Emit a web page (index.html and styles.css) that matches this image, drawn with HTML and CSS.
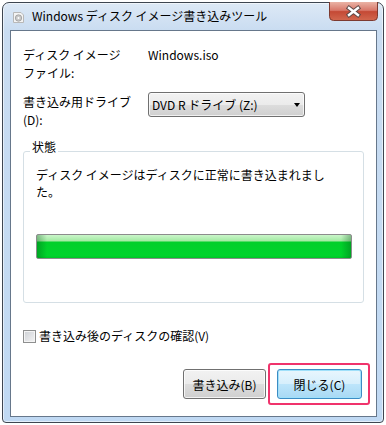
FILE: index.html
```html
<!DOCTYPE html>
<html lang="ja">
<head>
    <meta charset="UTF-8">
    <title>Windows ディスク イメージ書き込みツール</title>
    <link rel="stylesheet" href="styles.css">
</head>
<body>
    <div class="window">
        <div class="titlebar">
            <svg class="app-icon" width="11" height="11" viewBox="0 0 11 11">
                <path d="M0.5 0.5 H8 L10.5 3 V10.5 H0.5 Z" fill="#f4f4f4" stroke="#b8b8b8"/>
                <circle cx="5.5" cy="6" r="3.2" fill="#c9c9c9" stroke="#9a9a9a" stroke-width="0.8"/>
                <circle cx="5.5" cy="6" r="1" fill="#fff"/>
            </svg>
            <span class="title">Windows ディスク イメージ書き込みツール</span>
            <svg class="close-btn" width="49" height="19" viewBox="0 0 49 19">
                <defs>
                    <linearGradient id="closeGrad" x1="0" y1="0" x2="0" y2="1">
                        <stop offset="0" stop-color="#eab3a5"/>
                        <stop offset="0.45" stop-color="#d8786a"/>
                        <stop offset="0.52" stop-color="#c44935"/>
                        <stop offset="1" stop-color="#d2684f"/>
                    </linearGradient>
                </defs>
                <path d="M0.5 0 V14.5 Q0.5 18.5 4.5 18.5 H44.5 Q48.5 18.5 48.5 14.5 V0" fill="url(#closeGrad)" stroke="#7c3a30"/>
                <path d="M20 6 L29 13 M29 6 L20 13" stroke="#5c4846" stroke-width="4.4" stroke-linecap="square"/>
                <path d="M20 6 L29 13 M29 6 L20 13" stroke="#fff" stroke-width="2.4" stroke-linecap="square"/>
            </svg>
        </div>
        <div class="client">
            <div class="row">
                <div class="label">ディスク イメージ<br>ファイル:</div>
                <div class="value">Windows.iso</div>
            </div>
            <div class="row">
                <div class="label">書き込み用ドライブ<br>(D):</div>
                <div class="select">
                    <span>DVD R ドライブ (Z:)</span>
                    <span class="arrow"></span>
                </div>
            </div>
            <fieldset class="group">
                <legend>状態</legend>
                <div class="status-text">ディスク イメージはディスクに正常に書き込まれました。</div>
                <div class="progress"></div>
            </fieldset>
            <div class="check-row">
                <span class="checkbox"></span>
                <span class="check-label">書き込み後のディスクの確認(V)</span>
            </div>
            <div class="buttons">
                <button class="btn btn-burn">書き込み(B)</button>
                <span class="highlight">
                    <button class="btn btn-default">閉じる(C)</button>
                </span>
            </div>
        </div>
    </div>
</body>
</html>
```

FILE: styles.css
```css
* {
    box-sizing: border-box;
}
body {
    margin: 0;
    background: #fff;
    font-family: "Noto Sans CJK JP", "Noto Sans", sans-serif;
    font-size: 12px;
    color: #000;
}
.window {
    margin: 2px 0 0 2px;
    width: 382px;
    height: 421px;
    border: 1px solid #3e4651;
    border-radius: 7px 7px 4px 4px;
    background: linear-gradient(180deg, #dde9f6 0%, #c9dcf1 28px, #c0d9f3 100%);
    box-shadow: inset 0 0 0 1px rgba(255, 255, 255, 0.55);
    display: flex;
    flex-direction: column;
}
.titlebar {
    height: 27px;
    display: flex;
    align-items: flex-start;
    padding-left: 10px;
}
.app-icon {
    margin-top: 9px;
}
.title {
    margin-left: 8px;
    margin-top: 4px;
    line-height: 18px;
}
.close-btn {
    margin-left: auto;
    margin-right: 5px;
    margin-top: -1px;
}
.client {
    flex: 1;
    margin: 0 6px 5px 7px;
    background: #fff;
    border: 1px solid #66778b;
    padding: 15px 6px 0 12px;
}
.row {
    display: flex;
    line-height: 18px;
}
.row + .row {
    margin-top: 11px;
}
.label {
    width: 125px;
}
.select {
    margin-top: -1px;
    width: 157px;
    height: 25px;
    border: 1px solid #707070;
    border-radius: 3px;
    background: linear-gradient(#f2f2f2 0%, #ebebeb 50%, #dddddd 51%, #cfcfcf 100%);
    box-shadow: inset 0 0 0 1px rgba(255, 255, 255, 0.7);
    display: flex;
    align-items: center;
    justify-content: space-between;
    padding: 0 4px 0 3px;
    line-height: 23px;
}
.arrow {
    width: 0;
    height: 0;
    border-left: 3.5px solid transparent;
    border-right: 3.5px solid transparent;
    border-top: 4px solid #000;
}
.group {
    margin: 9px 6px 0 0;
    padding: 2px 11px 43px 12px;
    border: 1px solid #d5dfe5;
    border-radius: 3px;
    min-width: 0;
}
.group legend {
    margin-left: -6px;
    padding: 0 2px 8px;
    line-height: 18px;
}
.status-text {
    width: 300px;
    line-height: 17px;
}
.progress {
    margin-top: 34px;
    height: 25px;
    border: 1px solid #8c8c8c;
    border-radius: 2px;
    background:
        linear-gradient(to right, rgba(0, 80, 20, 0.35), rgba(0, 80, 20, 0) 10px, rgba(0, 80, 20, 0) calc(100% - 10px), rgba(0, 80, 20, 0.35)),
        linear-gradient(#caf6ca 0, #a2eaa2 6px, #00cf2a 7px, #00d42c 90%, #00c427 100%);
}
.check-row {
    margin-top: 24px;
    display: flex;
    align-items: center;
    line-height: 18px;
}
.checkbox {
    width: 13px;
    height: 13px;
    border: 1px solid #8e8f8f;
    background: linear-gradient(135deg, #cdd0d5, #f4f4f4);
    box-shadow: inset 0 0 0 1px #f4f4f4;
}
.check-label {
    margin-left: 3px;
}
.buttons {
    margin-top: 18px;
    display: flex;
    justify-content: flex-end;
    align-items: center;
}
.btn {
    height: 30px;
    padding: 0;
    font: inherit;
    color: #000;
    border: 1px solid #707070;
    border-radius: 3px;
    background: linear-gradient(#f2f2f2 0%, #ebebeb 50%, #dddddd 51%, #cfcfcf 100%);
    box-shadow: inset 0 0 0 1px rgba(255, 255, 255, 0.75);
}
.btn-burn {
    width: 83px;
    margin-right: 2px;
}
.highlight {
    display: flex;
    border: 2px solid #f0336c;
    border-radius: 3px;
    padding: 4px 6px 4px 7px;
}
.btn-default {
    width: 85px;
    border-color: #3c8cc4;
    background: linear-gradient(#e8f6fd 0%, #d6effc 50%, #bde5fb 51%, #a8d9f4 100%);
    box-shadow: inset 0 0 0 1px #9fe0fa;
}
```
